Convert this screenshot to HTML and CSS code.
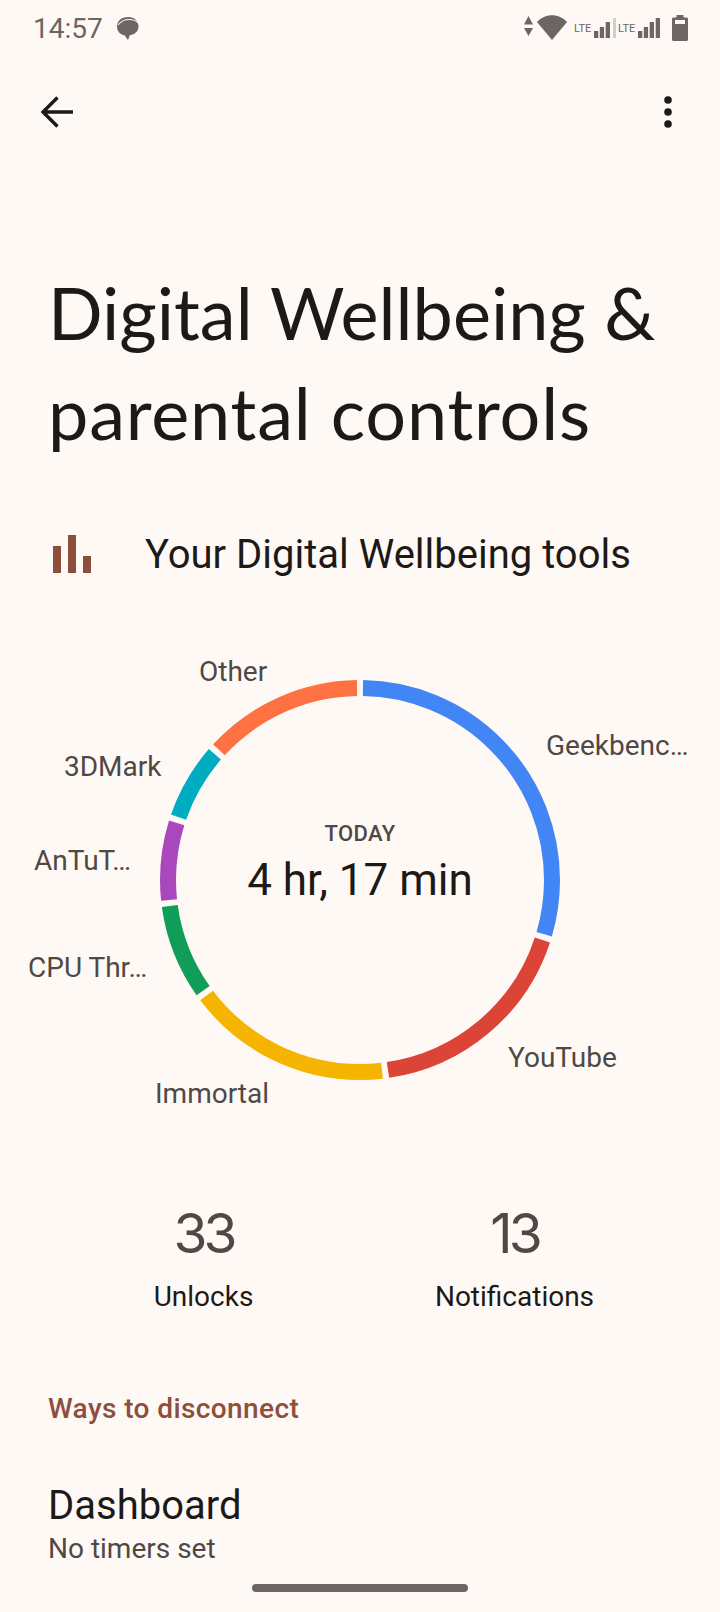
FILE: index.html
```html
<!DOCTYPE html>
<html lang="en">
<head>
    <meta charset="UTF-8">
    <meta name="viewport" content="width=device-width, initial-scale=1.0">
    <title>Digital Wellbeing &amp; parental controls</title>
    <link rel="stylesheet" href="styles.css">
</head>
<body>
    <div class="status-bar">
        <div class="status-left">
            <span class="clock">14:57</span>
            <svg class="chat-icon" width="24" height="24" viewBox="0 0 24 24">
                <path d="M12 1c-6.500 0-11 4-11 9.500 0 4.800 3.300 8 7.500 8.800l3.500 4.700 1.800-4.800c5-.700 8.700-4 8.700-8.700 0-5.500-4-9.500-10.500-9.500z" fill="#6b6664"/>
                <path d="M2 9c3-3.800 7-5.500 11-5.500s7 1 9 3.500" fill="none" stroke="#fff9f5" stroke-width="1.100"/>
            </svg>
        </div>
        <div class="status-right">
            <svg class="data-arrows" width="9" height="26" viewBox="0 0 9 26">
                <path d="M4.500 1l4.500 8.500h-9zM4.500 21l-4.500-8h9z" fill="#6b6664"/>
            </svg>
            <svg class="wifi" width="30" height="26" viewBox="0 0 30 26">
                <path d="M0 7c8-9 22-9 30 0l-15 18z" fill="#6b6664"/>
            </svg>
            <span class="lte">LTE</span>
            <svg class="bars" width="16" height="26" viewBox="0 0 16 26">
                <path d="M0 16h4.300v7h-4.300zM5.800 12h4.300v11h-4.300zM11.700 7h4.300v16h-4.300z" fill="#6b6664"/>
            </svg>
            <i class="sim-divider"></i>
            <span class="lte">LTE</span>
            <svg class="bars" width="22" height="26" viewBox="0 0 22 26">
                <path d="M0 16h4.300v7h-4.300zM5.800 12h4.300v11h-4.300zM11.700 7h4.300v16h-4.300zM17.700 3h4.300v20h-4.300z" fill="#6b6664"/>
            </svg>
            <svg class="battery" width="16" height="26" viewBox="0 0 16 26">
                <path d="M4.500 0h7v2.500h3c.800 0 1.500.700 1.500 1.500v20.500c0 .800-.700 1.500-1.500 1.500h-13c-.800 0-1.500-.700-1.500-1.500v-20.500c0-.800.700-1.500 1.500-1.500h3z" fill="#6b6664"/>
                <rect x="3" y="5" width="10" height="4" fill="#fff9f5"/>
            </svg>
        </div>
    </div>

    <div class="toolbar">
        <svg width="34" height="32" viewBox="0 0 34 32">
            <path d="M33 16h-30M17.500 1.500l-14.500 14.500 14.500 14.500" fill="none" stroke="#1c1917" stroke-width="3.400"/>
        </svg>
        <svg width="8" height="32" viewBox="0 0 8 32">
            <circle cx="4" cy="4" r="3.800" fill="#1c1917"/>
            <circle cx="4" cy="16" r="3.800" fill="#1c1917"/>
            <circle cx="4" cy="28" r="3.800" fill="#1c1917"/>
        </svg>
    </div>

    <h1 class="page-title">Digital Wellbeing &amp;<br><span class="title-second">parental controls</span></h1>

    <div class="tools-row">
        <svg width="38" height="38" viewBox="0 0 38 38">
            <path d="M0 11h8v27h-8zM15 0h8v38h-8zM30 21h8v17h-8z" fill="#8e4e3e"/>
        </svg>
        <span class="tools-label">Your Digital Wellbeing tools</span>
    </div>

    <div class="chart">
        <svg class="ring" width="720" height="440" viewBox="0 0 720 440">
            <g transform="rotate(-90 360 220)" fill="none" stroke-width="16">
                <circle cx="360" cy="220" r="192" pathLength="360" stroke="#4285f4" stroke-dasharray="105.500 360" stroke-dashoffset="-0.900"/>
                <circle cx="360" cy="220" r="192" pathLength="360" stroke="#db4437" stroke-dasharray="63.400 360" stroke-dashoffset="-108.200"/>
                <circle cx="360" cy="220" r="192" pathLength="360" stroke="#f4b400" stroke-dasharray="59.600 360" stroke-dashoffset="-173.400"/>
                <circle cx="360" cy="220" r="192" pathLength="360" stroke="#0f9d58" stroke-dasharray="27.400 360" stroke-dashoffset="-234.800"/>
                <circle cx="360" cy="220" r="192" pathLength="360" stroke="#ab47bc" stroke-dasharray="23.300 360" stroke-dashoffset="-264"/>
                <circle cx="360" cy="220" r="192" pathLength="360" stroke="#00acc1" stroke-dasharray="21.800 360" stroke-dashoffset="-289.100"/>
                <circle cx="360" cy="220" r="192" pathLength="360" stroke="#ff7043" stroke-dasharray="46.400 360" stroke-dashoffset="-312.700"/>
            </g>
        </svg>
        <span class="slice-label label-other">Other</span>
        <span class="slice-label label-geekbench">Geekbenc…</span>
        <span class="slice-label label-3dmark">3DMark</span>
        <span class="slice-label label-antutu">AnTuT…</span>
        <span class="slice-label label-cpu">CPU Thr…</span>
        <span class="slice-label label-immortal">Immortal</span>
        <span class="slice-label label-youtube">YouTube</span>
        <div class="chart-center">
            <span class="chart-day">TODAY</span>
            <span class="chart-total">4 hr, 17 min</span>
        </div>
    </div>

    <div class="stats">
        <div class="stat">
            <span class="stat-number">33</span>
            <span class="stat-label">Unlocks</span>
        </div>
        <div class="stat">
            <span class="stat-number">13</span>
            <span class="stat-label">Notifications</span>
        </div>
    </div>

    <h2 class="section-title">Ways to disconnect</h2>

    <div class="list-item">
        <div class="item-title">Dashboard</div>
        <div class="item-summary">No timers set</div>
    </div>

    <div class="home-pill"></div>
</body>
</html>
```

FILE: styles.css
```css
body {
    margin: 0;
    height: 1612px;
    overflow: hidden;
    position: relative;
    background-color: #fff9f5;
    color: #1c1917;
    font-family: Roboto, sans-serif;
}
.status-bar {
    display: flex;
    justify-content: space-between;
    height: 56px;
    padding: 0 32px 0 33px;
}
.status-left, .status-right {
    display: flex;
    align-items: center;
}
.clock {
    font-size: 28px;
    color: #6b6664;
}
.chat-icon {
    margin-left: 13px;
}
.status-right svg {
    display: block;
}
.wifi {
    margin-left: 4px;
}
.lte {
    width: 18px;
    margin-left: 7px;
    font-size: 11px;
    line-height: 12px;
    color: #6b6664;
    margin-top: 2px;
}
.bars {
    margin-left: 2px;
}
.sim-divider {
    width: 3px;
    height: 20px;
    margin-left: 3px;
    margin-right: -5px;
    background-color: #d0cdcb;
}
.battery {
    margin-left: 12px;
}
.toolbar {
    display: flex;
    justify-content: space-between;
    align-items: center;
    height: 112px;
    padding: 0 48px 0 40px;
}
.page-title {
    margin: 94px 0 0;
    padding-left: 48px;
    font-family: Lato, sans-serif;
    font-weight: 400;
    font-size: 72px;
    line-height: 100px;
}
.title-second {
    letter-spacing: 0.8px;
}
.tools-row {
    display: flex;
    align-items: center;
    gap: 54px;
    margin-top: 71px;
    padding-left: 53px;
}
.tools-label {
    margin-top: 3px;
    font-size: 40px;
    line-height: 38px;
}
.chart {
    position: relative;
    height: 440px;
    margin-top: 86px;
}
.ring {
    display: block;
}
.slice-label {
    position: absolute;
    font-size: 28px;
    line-height: 32px;
    color: #4f4845;
    white-space: nowrap;
}
.label-other { left: 199px; top: -4px; }
.label-geekbench { left: 546px; top: 70px; }
.label-3dmark { left: 64px; top: 91px; }
.label-antutu { left: 34px; top: 185px; }
.label-cpu { left: 28px; top: 292px; }
.label-immortal { left: 155px; top: 418px; }
.label-youtube { left: 508px; top: 382px; }
.chart-center {
    position: absolute;
    left: 160px;
    top: 160px;
    width: 400px;
    display: flex;
    flex-direction: column;
    align-items: center;
    gap: 6px;
}
.chart-day {
    font-size: 22px;
    line-height: 28px;
    font-weight: 500;
    letter-spacing: 0.4px;
    color: #4f4845;
}
.chart-total {
    font-size: 44px;
    line-height: 52px;
}
.stats {
    display: grid;
    grid-template-columns: 1fr 1fr;
    margin-top: 101px;
    padding: 0 50px 0 48px;
}
.stat {
    display: flex;
    flex-direction: column;
    align-items: center;
    gap: 12px;
}
.stat-number {
    font-family: Inter, sans-serif;
    font-size: 55px;
    line-height: 64px;
    letter-spacing: -4px;
    color: #4f4845;
}
.stat-label {
    font-size: 28px;
    line-height: 40px;
}
.section-title {
    margin: 74px 0 0;
    padding-left: 48px;
    font-size: 28px;
    line-height: 36px;
    font-weight: 500;
    letter-spacing: 0.4px;
    color: #8e4e3e;
}
.list-item {
    margin-top: 55px;
    padding-left: 48px;
}
.item-title {
    font-size: 40px;
    line-height: 48px;
}
.item-summary {
    margin-top: 1px;
    font-size: 28px;
    line-height: 36px;
    color: #4f4845;
}
.home-pill {
    position: absolute;
    left: 252px;
    top: 1584px;
    width: 216px;
    height: 8px;
    border-radius: 4px;
    background-color: #6b6664;
}
```
